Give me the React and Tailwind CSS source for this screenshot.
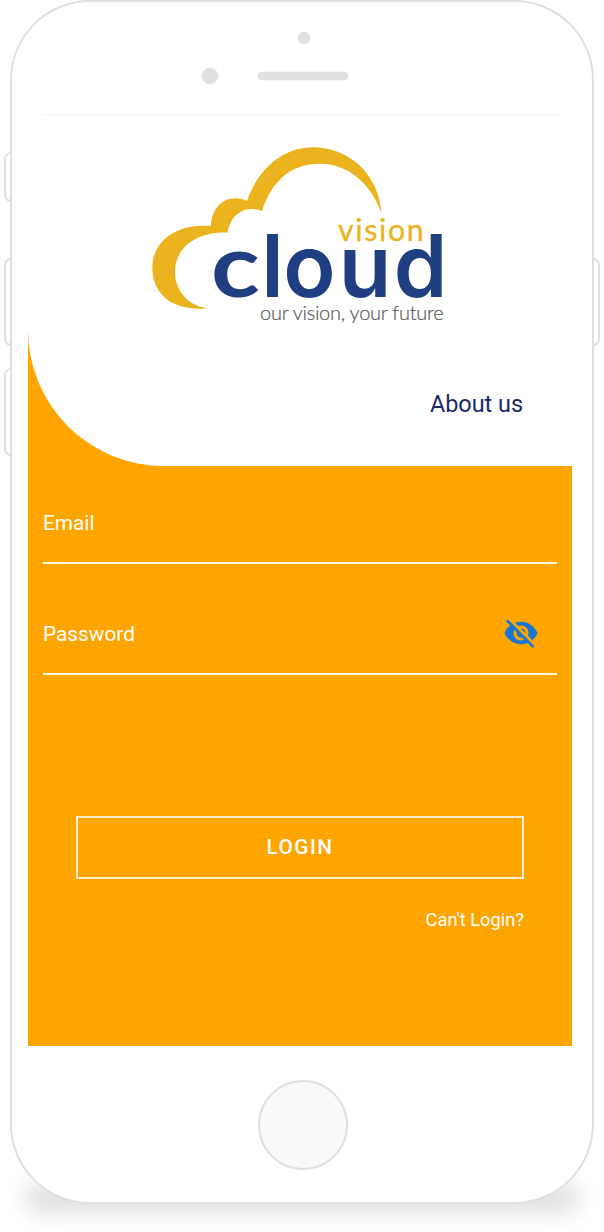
import { MdVisibilityOff } from "react-icons/md";

function Logo() {
  return (
    <svg className="block h-[200px] w-[320px]" viewBox="0 0 960 600" role="img" aria-label="vision cloud">
      <path
        fill="#ebb41e"
        d="M210 520C100 530 37 480 37 398C37 322 102 272 190 272L213 272C214 225 245 190 285 190C300 190 312 193 321 198C355 100 430 37 520 37C620 37 715 110 725 235C690 140 620 86 540 86C450 86 395 140 366 228C350 223 345 222 335 222C295 222 268 255 263 293C180 290 105 330 105 412C105 465 145 518 210 520Z"
      />
      <g fontFamily="Lato, sans-serif">
        <text y="317" x="594" fontSize="91" fontWeight="400" fill="#ebb41e" stroke="#ebb41e" strokeWidth="1" textLength="257" lengthAdjust="spacing">vision</text>
        <g fill="#203e82">
          <text transform="translate(213 485) scale(1.14 1)" fontSize="266" fontWeight="700">c</text>
          <text y="485" x="364 430 596 761" fontSize="258" fontWeight="600" fontFamily="Inter, sans-serif">loud</text>
        </g>
        <text y="554" x="360" fontSize="60" fontWeight="300" fill="#58585a" stroke="#58585a" strokeWidth="0.6" textLength="551" lengthAdjust="spacing">our vision, your future</text>
      </g>
    </svg>
  );
}

function SideButton({ className }) {
  return <div className={`absolute border-2 border-[#e0e0e0] bg-white ${className}`} />;
}

function Phone({ children }) {
  return (
    <div className="relative h-[1232px] w-[604px] overflow-hidden bg-white px-[10px]">
      <div className="absolute left-[24px] top-[1182px] h-[32px] w-[556px] rounded-[16px] bg-[#e2e2e2] blur-[10px]" />
      <SideButton className="left-[4px] top-[152px] h-[50px] w-[12px] rounded-l-[7px]" />
      <SideButton className="left-[4px] top-[258px] h-[88px] w-[12px] rounded-l-[7px]" />
      <SideButton className="left-[4px] top-[368px] h-[88px] w-[12px] rounded-l-[7px]" />
      <SideButton className="left-[588px] top-[258px] h-[88px] w-[12px] rounded-r-[7px]" />
      <div className="relative flex h-[1204px] w-[584px] flex-col rounded-[80px] border-2 border-[#e0e0e0] bg-white px-4">
        <header className="flex h-[112px] shrink-0 flex-col pt-[30px]">
          <div className="ml-[270px] size-3 rounded-full bg-[#e0e0e0] shadow-[0_0_1px_1px_#f8f8f8]" />
          <div className="mt-6 flex items-center gap-10 pl-[174px]">
            <div className="size-4 rounded-full bg-[#e0e0e0] shadow-[0_0_1px_1px_#f8f8f8]" />
            <div className="h-2 w-[90px] rounded-full bg-[#e0e0e0] shadow-[0_0_1px_1px_#f8f8f8]" />
          </div>
        </header>
        {children}
        <footer className="flex pl-[230px] pt-[34px]">
          <div className="size-[90px] rounded-full border-2 border-[#e0e0e0] bg-[#f9f9f9]" />
        </footer>
      </div>
    </div>
  );
}

export default function App() {
  return (
    <Phone>
      <main className="flex h-[932px] w-[544px] shrink-0 flex-col bg-[#ffa500] font-[Roboto,sans-serif] text-white">
        <section className="h-[352px] rounded-bl-[136px] bg-white">
          <div className="ml-[14px] h-0.5 w-[520px] bg-[#fafafa]" />
          <div className="ml-[112px] mt-[19px]">
            <Logo />
          </div>
          <div className="mt-[53px] pr-[49px] text-right text-[23.4px] leading-8 text-[#1a2a66]">About us</div>
        </section>
        <form className="flex flex-col px-[15px]">
          <div className="flex h-[98px] items-start border-b-2 border-[#fff4df] pt-[43px] text-[20.8px] leading-7">
            Email
          </div>
          <div className="flex h-[111px] items-start justify-between border-b-2 border-[#fff4df] pr-[18px] pt-[51px]">
            <span className="pt-[5px] text-[20.8px] leading-7">Password</span>
            <MdVisibilityOff className="size-9 text-[#1976d2]" />
          </div>
          <button
            type="button"
            className="ml-[33px] mt-[141px] flex h-[63px] w-[448px] items-center justify-center border-2 border-[#fff0d2] pt-px text-[20.8px] font-medium tracking-[1.5px]"
          >
            LOGIN
          </button>
          <div className="mt-[27px] pr-[33px] text-right text-[18.3px] leading-7">Can't Login?</div>
        </form>
      </main>
    </Phone>
  );
}
